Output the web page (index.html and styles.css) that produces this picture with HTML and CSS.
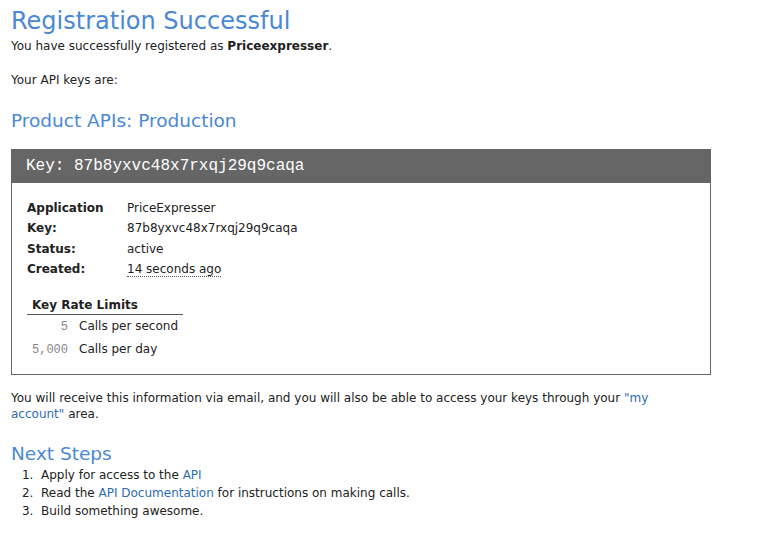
FILE: index.html
```html
<!DOCTYPE html>
<html>
<head>
<meta charset="utf-8">
<link rel="stylesheet" href="styles.css">
</head>
<body>
<div class="page">
  <h1 class="title">Registration Successful</h1>
  <p class="intro">You have successfully registered as <strong>Priceexpresser</strong>.</p>
  <p class="keys-intro">Your API keys are:</p>
  <h2 class="section">Product APIs: Production</h2>
  <div class="keybox">
    <div class="keybox-head">Key: 87b8yxvc48x7rxqj29q9caqa</div>
    <div class="keybox-body">
      <dl class="info">
        <dt>Application</dt><dd>PriceExpresser</dd>
        <dt>Key:</dt><dd>87b8yxvc48x7rxqj29q9caqa</dd>
        <dt>Status:</dt><dd>active</dd>
        <dt>Created:</dt><dd><span class="time">14 seconds ago</span></dd>
      </dl>
      <div class="limits">
        <div class="limits-head">Key Rate Limits</div>
        <div class="limit-row"><span class="num">5</span><span>Calls per second</span></div>
        <div class="limit-row"><span class="num">5,000</span><span>Calls per day</span></div>
      </div>
    </div>
  </div>
  <p class="notice">You will receive this information via email, and you will also be able to access your keys through your <a href="#">"my account"</a> area.</p>
  <h2 class="section next">Next Steps</h2>
  <ol class="steps">
    <li>Apply for access to the <a href="#">API</a></li>
    <li>Read the <a href="#">API Documentation</a> for instructions on making calls.</li>
    <li>Build something awesome.</li>
  </ol>
</div>
</body>
</html>
```

FILE: styles.css
```css
html, body {
  margin: 0;
  padding: 0;
  background: #fff;
}
body {
  font-family: "DejaVu Sans", Verdana, sans-serif;
  font-size: 12px;
  color: #222;
}
.page {
  padding: 6px 11px 0 11px;
  width: 700px;
}
a {
  color: #2d6db3;
  text-decoration: none;
}
.title {
  margin: 0;
  font-size: 24px;
  font-weight: normal;
  line-height: 31px;
  color: #4a88d6;
}
.intro {
  margin: 0;
  line-height: 18px;
}
.keys-intro {
  margin: 16px 0 0;
  line-height: 18px;
}
.section {
  margin: 20px 0 0;
  font-size: 18.5px;
  font-weight: normal;
  line-height: 24px;
  color: #4a88d6;
}
.keybox {
  margin-top: 16px;
  border: 1px solid #666;
  border-top: 0;
}
.keybox-head {
  background: #666;
  color: #fff;
  font-family: "Liberation Mono", "Courier New", monospace;
  font-size: 16px;
  height: 34px;
  line-height: 34px;
  padding: 0 15px;
  margin: 0 -1px;
}
.keybox-body {
  padding: 15px 15px 13px;
}
.info {
  display: grid;
  grid-template-columns: 100px auto;
  margin: 0;
}
.info dt {
  font-weight: bold;
  line-height: 20.3px;
}
.info dd {
  margin: 0;
  line-height: 20.3px;
}
.time {
  border-bottom: 1px dotted #555;
}
.limits {
  margin-top: 17px;
  width: 156px;
}
.limits-head {
  font-weight: bold;
  padding-left: 5px;
  line-height: 18px;
  border-bottom: 1px solid #555;
}
.limit-row {
  display: flex;
  align-items: baseline;
  gap: 11px;
  line-height: 22px;
  white-space: nowrap;
}
.num {
  width: 41px;
  text-align: right;
  font-family: "Liberation Mono", monospace;
  font-size: 12px;
  color: #888;
}
.notice {
  margin: 15px 0 0;
  line-height: 16px;
  padding-right: 40px;
}
.next {
  margin-top: 20px;
  line-height: 24px;
}
.steps {
  margin: 0;
  padding-left: 30px;
}
.steps li {
  line-height: 18px;
}
.steps li::marker {
  content: counter(list-item) ".\00a0\00a0";
}
```
